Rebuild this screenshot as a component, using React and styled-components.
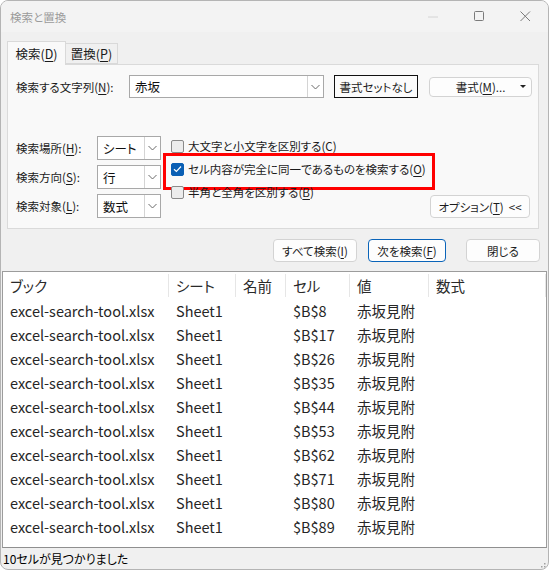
import React from "react";
import styled, { createGlobalStyle, css } from "styled-components";

const FONT = `"Noto Sans CJK JP", "Noto Sans", sans-serif`;

const Global = createGlobalStyle`
  html, body { margin: 0; padding: 0; background: #ffffff; }
  body { font-family: ${FONT}; font-feature-settings: "palt"; -webkit-font-smoothing: antialiased; }
  * { box-sizing: border-box; }
`;

const Window = styled.div`
  width: 549px;
  height: 570px;
  border: 1px solid #b4b4b4;
  border-radius: 8px;
  overflow: hidden;
  background: #f0f0f0;
  display: flex;
  flex-direction: column;
  font-size: 11.5px;
  color: #1b1b1b;
`;

const TitleBar = styled.div`
  height: 31px;
  flex: none;
  background: #f3f3f3;
  display: flex;
  align-items: center;
  padding-left: 9px;
`;

const Title = styled.div`
  color: #9b9b9b;
  font-size: 11.5px;
`;

const Controls = styled.div`
  margin-left: auto;
  display: flex;
  height: 100%;
`;

const Ctrl = styled.div`
  width: 46px;
  height: 100%;
  display: flex;
  align-items: center;
  justify-content: center;
`;

const Upper = styled.div`
  padding: 9px 9px 0 6px;
`;

const TabStrip = styled.div`
  display: flex;
  align-items: flex-end;
  height: 23px;
  position: relative;
  z-index: 1;
`;

const Tab = styled.div`
  height: ${(p) => (p.$active ? 24 : 21)}px;
  width: ${(p) => p.$w}px;
  display: flex;
  align-items: center;
  justify-content: center;
  border: 1px solid #d9d9d9;
  border-bottom: ${(p) => (p.$active ? "none" : "1px solid #d9d9d9")};
  border-left: ${(p) => (p.$first ? "1px solid #d9d9d9" : "none")};
  background: ${(p) => (p.$active ? "#f9f9f9" : "#f0f0f0")};
  margin-bottom: ${(p) => (p.$active ? -1 : 0)}px;
  font-size: 12.5px;
  color: #1a1a1a;
`;

const Panel = styled.div`
  height: 165px;
  border: 1px solid #dadada;
  background: #f9f9f9;
  padding: 10px 7px 9px 8px;
  display: flex;
  flex-direction: column;
`;

const FindRow = styled.div`
  display: flex;
  align-items: center;
  height: 23px;
`;

const Label = styled.div`
  width: ${(p) => p.$w}px;
  flex: none;
  white-space: nowrap;
  font-size: 11.5px;
  color: #1b1b1b;
`;

const Mn = styled.span`
  text-decoration: underline;
  text-underline-offset: 2px;
`;

const Combo = styled.div`
  width: ${(p) => p.$w}px;
  height: ${(p) => p.$h || 23}px;
  flex: none;
  display: flex;
  background: #ffffff;
  border: 1px solid #a8a8a8;
`;

const ComboText = styled.div`
  flex: 1;
  display: flex;
  align-items: center;
  padding-left: 5px;
  font-size: 12.5px;
  color: #111;
`;

const ComboArrow = styled.div`
  width: 16px;
  flex: none;
  border-left: 1px solid #d4d4d4;
  display: flex;
  align-items: center;
  justify-content: center;
`;

const Button = styled.div`
  height: ${(p) => p.$h || 23}px;
  width: ${(p) => p.$w}px;
  flex: none;
  margin-left: ${(p) => p.$ml || 0}px;
  display: flex;
  align-items: center;
  justify-content: center;
  position: relative;
  white-space: nowrap;
  font-size: 11.5px;
  color: #1b1b1b;
  background: #fdfdfd;
  border: 1px solid #d3d3d3;
  border-radius: 4px;
  ${(p) =>
    p.$variant === "square" &&
    css`
      border: 1px solid #111;
      border-radius: 0;
      background: #fbfbfb;
    `}
  ${(p) =>
    p.$variant === "default" &&
    css`
      border: 1px solid #0a64b9;
    `}
`;

const DropTri = styled.span`
  position: absolute;
  right: 5px;
  top: 50%;
  margin-top: -2px;
  width: 0;
  height: 0;
  border-left: 3px solid transparent;
  border-right: 3px solid transparent;
  border-top: 3px solid #222;
`;

const Lower = styled.div`
  margin-top: 38px;
  display: flex;
  height: 82px;
`;

const Fields = styled.div`
  display: flex;
  flex-direction: column;
  gap: 5px;
`;

const FieldRow = styled.div`
  display: flex;
  align-items: center;
  height: 24px;
`;

const Checks = styled.div`
  margin-left: 10px;
  margin-top: -1px;
  display: flex;
  flex-direction: column;
  gap: 1px;
`;

const CheckRow = styled.div`
  position: relative;
  height: 22px;
  display: flex;
  align-items: center;
  gap: 4px;
  font-size: 11.5px;
  white-space: nowrap;
  ${(p) =>
    p.$highlight &&
    css`
      &::after {
        content: "";
        position: absolute;
        left: -8px;
        top: -5px;
        width: 266px;
        height: 31px;
        border: 3px solid #ff0000;
        pointer-events: none;
      }
    `}
`;

const Box = styled.div`
  width: 13px;
  height: 13px;
  flex: none;
  border-radius: 2px;
  border: 1px solid ${(p) => (p.$checked ? "#0a5fb4" : "#8a8a8a")};
  background: ${(p) => (p.$checked ? "#0a5fb4" : "#ececec")};
  display: flex;
  align-items: center;
  justify-content: center;
`;

const OptionButton = styled(Button)`
  align-self: flex-end;
  margin-left: auto;
  margin-right: 1px;
`;

const ButtonRow = styled.div`
  display: flex;
  justify-content: flex-end;
  margin-top: 10px;
  margin-right: -1px;
`;

const List = styled.div`
  margin: 9px 1px 0 1px;
  flex: 1;
  background: #ffffff;
  border: 1px solid #9c9c9c;
  border-bottom: 1px solid #8f8f8f;
  display: flex;
  flex-direction: column;
`;

const Grid = styled.div`
  display: grid;
  grid-template-columns: 166px 67px 50px 64px 79px 1fr;
`;

const HeadCell = styled.div`
  height: 26px;
  display: flex;
  align-items: center;
  padding-left: 7px;
  font-size: 14.5px;
  color: #2a2a2a;
  position: relative;
  &::after {
    content: "";
    position: absolute;
    right: 0;
    top: 2px;
    bottom: 1px;
    width: 1px;
    background: #e6e6e6;
  }
`;

const Cell = styled.div`
  height: 24px;
  display: flex;
  align-items: center;
  padding-left: 7px;
  font-size: 14.5px;
  color: #262626;
  white-space: nowrap;
  overflow: hidden;
`;

const StatusBar = styled.div`
  height: 21px;
  flex: none;
  display: flex;
  align-items: center;
  padding-left: 2px;
  font-size: 12px;
  color: #000;
  position: relative;
`;

const Grip = styled.div`
  position: absolute;
  right: 2px;
  bottom: 2px;
  width: 10px;
  height: 10px;
`;

const Chevron = () => (
  <svg width="9" height="6" viewBox="0 0 9 6">
    <polyline points="0.5,1 4.5,5 8.5,1" fill="none" stroke="#6a6a6a" strokeWidth="1" />
  </svg>
);

const Check = () => (
  <svg width="9" height="8" viewBox="0 0 9 8">
    <polyline points="1,4.2 3.4,6.4 8,1.5" fill="none" stroke="#ffffff" strokeWidth="1.2" />
  </svg>
);

const rows = ["8", "17", "26", "35", "44", "53", "62", "71", "80", "89"];

const Field = ({ label, mn, value }) => (
  <FieldRow>
    <Label $w={81}>
      {label}(<Mn>{mn}</Mn>):
    </Label>
    <Combo $w={64} $h={24}>
      <ComboText>{value}</ComboText>
      <ComboArrow>
        <Chevron />
      </ComboArrow>
    </Combo>
  </FieldRow>
);

const Option = ({ checked, highlight, text, mn }) => (
  <CheckRow $highlight={highlight}>
    <Box $checked={checked}>{checked && <Check />}</Box>
    <span>
      {text}(<Mn>{mn}</Mn>)
    </span>
  </CheckRow>
);

export default function App() {
  return (
    <>
      <Global />
      <Window>
        <TitleBar>
          <Title>検索と置換</Title>
          <Controls>
            <Ctrl>
              <svg width="11" height="2" viewBox="0 0 11 2">
                <line x1="0" y1="1" x2="10" y2="1" stroke="#d4d4d4" strokeWidth="1" />
              </svg>
            </Ctrl>
            <Ctrl>
              <svg width="11" height="11" viewBox="0 0 11 11">
                <rect x="0.5" y="0.5" width="9" height="9" rx="1" fill="none" stroke="#7a7a7a" strokeWidth="1" />
              </svg>
            </Ctrl>
            <Ctrl>
              <svg width="11" height="11" viewBox="0 0 11 11">
                <path d="M0.5 0.5 L10 10 M10 0.5 L0.5 10" stroke="#7a7a7a" strokeWidth="1" />
              </svg>
            </Ctrl>
          </Controls>
        </TitleBar>

        <Upper>
          <TabStrip>
            <Tab $active $first $w={59}>
              検索(<Mn>D</Mn>)
            </Tab>
            <Tab $w={52}>
              置換(<Mn>P</Mn>)
            </Tab>
          </TabStrip>
          <Panel>
            <FindRow>
              <Label $w={113}>
                検索する文字列(<Mn>N</Mn>):
              </Label>
              <Combo $w={195}>
                <ComboText>赤坂</ComboText>
                <ComboArrow>
                  <Chevron />
                </ComboArrow>
              </Combo>
              <Button $variant="square" $w={84} $ml={10}>
                書式セットなし
              </Button>
              <Button $w={103} $h={20} $ml={11}>
                書式(<Mn>M</Mn>)...
                <DropTri />
              </Button>
            </FindRow>

            <Lower>
              <Fields>
                <Field label="検索場所" mn="H" value="シート" />
                <Field label="検索方向" mn="S" value="行" />
                <Field label="検索対象" mn="L" value="数式" />
              </Fields>

              <Checks>
                <Option text="大文字と小文字を区別する" mn="C" />
                <Option checked highlight text="セル内容が完全に同一であるものを検索する" mn="O" />
                <Option text="半角と全角を区別する" mn="B" />
              </Checks>

              <OptionButton $w={100}>
                オプション(<Mn>T</Mn>)&nbsp;&nbsp;&lt;&lt;
              </OptionButton>
            </Lower>
          </Panel>

          <ButtonRow>
            <Button $w={84}>
              すべて検索(<Mn>I</Mn>)
            </Button>
            <Button $variant="default" $w={78} $ml={11}>
              次を検索(<Mn>F</Mn>)
            </Button>
            <Button $w={74} $ml={20}>
              閉じる
            </Button>
          </ButtonRow>
        </Upper>

        <List>
          <Grid>
            <HeadCell>ブック</HeadCell>
            <HeadCell>シート</HeadCell>
            <HeadCell>名前</HeadCell>
            <HeadCell>セル</HeadCell>
            <HeadCell>値</HeadCell>
            <HeadCell>数式</HeadCell>
            {rows.map((r) => (
              <React.Fragment key={r}>
                <Cell>excel-search-tool.xlsx</Cell>
                <Cell>Sheet1</Cell>
                <Cell />
                <Cell>{`$B$${r}`}</Cell>
                <Cell>赤坂見附</Cell>
                <Cell />
              </React.Fragment>
            ))}
          </Grid>
        </List>

        <StatusBar>
          10セルが見つかりました
          <Grip>
            <svg width="10" height="10" viewBox="0 0 10 10">
              {[
                [8, 2], [5, 5], [8, 5], [2, 8], [5, 8], [8, 8],
              ].map(([x, y]) => (
                <rect key={`${x}-${y}`} x={x} y={y} width="1.5" height="1.5" fill="#a0a0a0" />
              ))}
            </svg>
          </Grip>
        </StatusBar>
      </Window>
    </>
  );
}
